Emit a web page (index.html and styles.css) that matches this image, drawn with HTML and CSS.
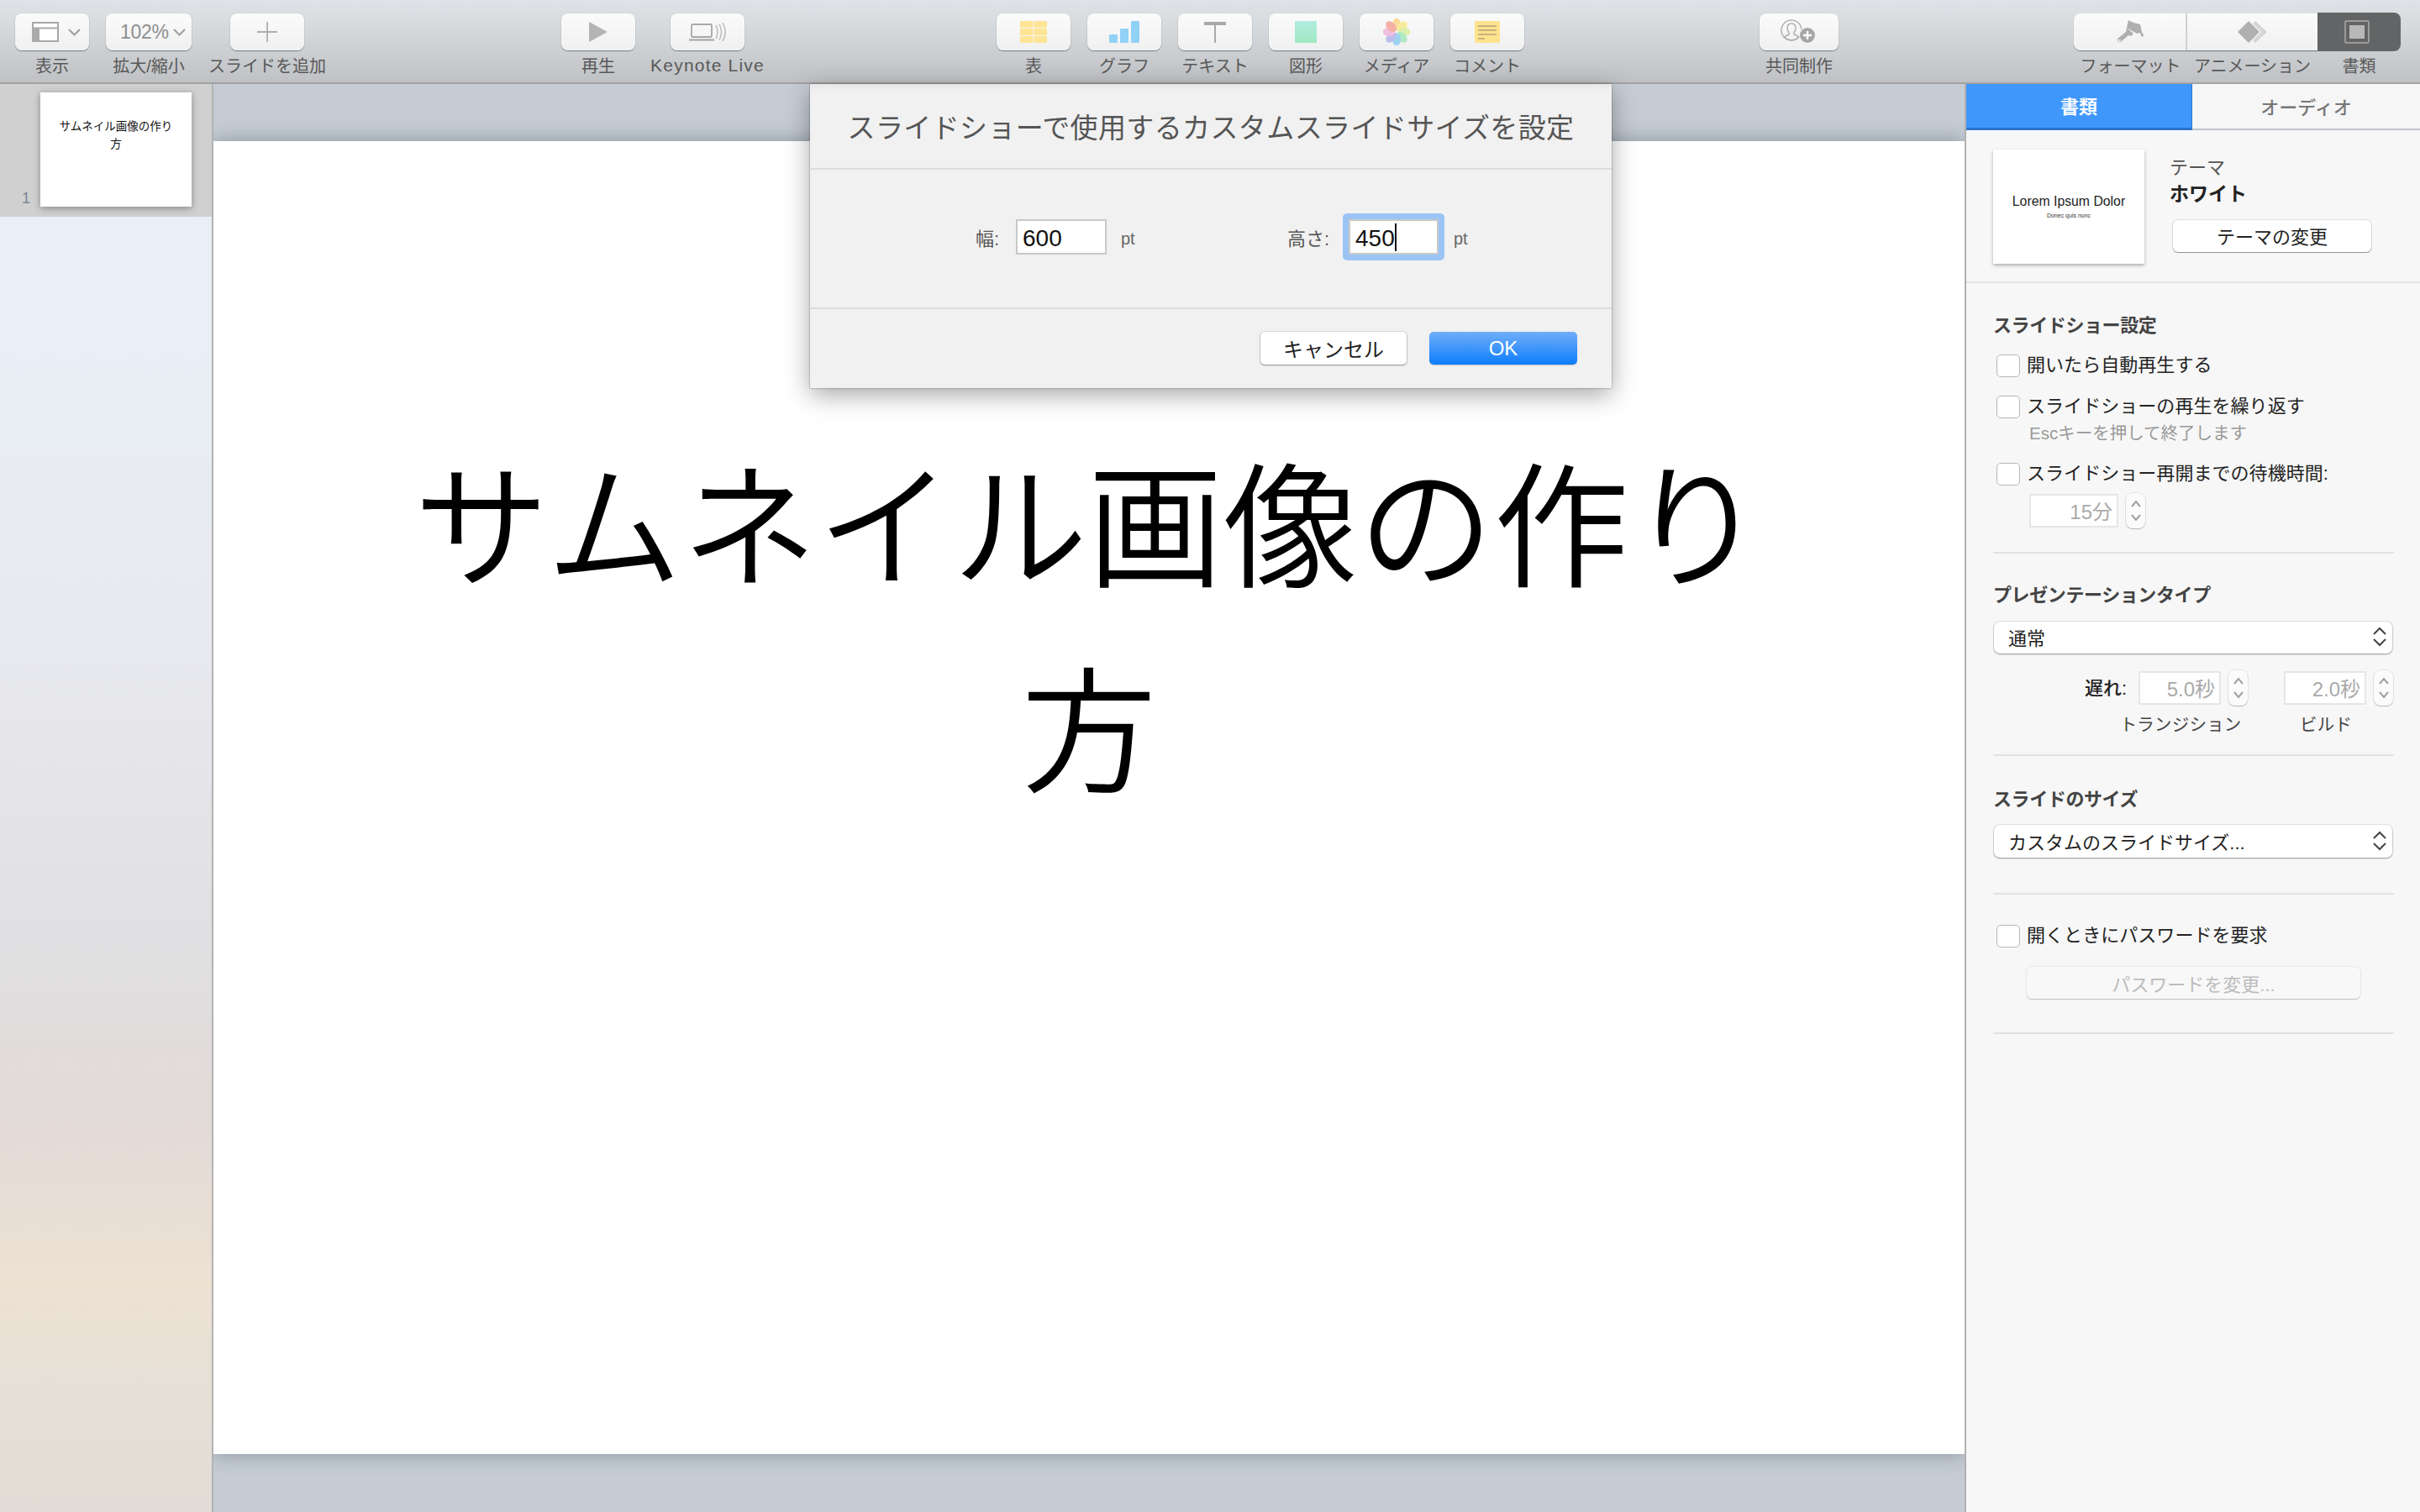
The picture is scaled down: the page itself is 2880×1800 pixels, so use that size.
FILE: index.html
```html
<!DOCTYPE html>
<html lang="ja">
<head>
<meta charset="utf-8">
<title>Keynote</title>
<link rel="stylesheet" href="styles.css">
</head>
<body>
<div class="app">
  <header class="toolbar">
    <div class="group group-a">
      <div class="tool"><div class="tb tb-split">
        <svg width="32" height="24" viewBox="0 0 32 24"><rect x="1" y="1" width="30" height="22" fill="#fff" stroke="#a8a8a8" stroke-width="2"/><path d="M1 7.500h30" stroke="#a8a8a8" stroke-width="2"/><rect y="7" width="9" height="17" fill="#aaa"/></svg>
        <svg class="chev" width="15" height="9" viewBox="0 0 15 9"><path d="M1 1l6.500 6.500L14 1" fill="none" stroke="#a0a0a0" stroke-width="2.200"/></svg>
      </div><span class="tlabel">表示</span></div>
      <div class="tool tool-zoom"><div class="tb tb-split tb-zoom"><span class="pct">102%</span>
        <svg class="chev" width="15" height="9" viewBox="0 0 15 9"><path d="M1 1l6.500 6.500L14 1" fill="none" stroke="#a0a0a0" stroke-width="2.200"/></svg>
      </div><span class="tlabel">拡大/縮小</span></div>
      <div class="tool tool-add"><div class="tb">
        <svg width="24" height="24" viewBox="0 0 24 24"><path d="M12 0v24M0 12h24" stroke="#aeaeae" stroke-width="1.800"/></svg>
      </div><span class="tlabel">スライドを追加</span></div>
    </div>
    <div class="group group-b">
      <div class="tool"><div class="tb">
        <svg width="22" height="24" viewBox="0 0 22 24"><path d="M0 0l22 12L0 24z" fill="#b4b4b4"/></svg>
      </div><span class="tlabel">再生</span></div>
      <div class="tool"><div class="tb">
        <svg width="44" height="22" viewBox="0 0 44 22"><rect x="3" y="2" width="24" height="15" rx="1.500" fill="none" stroke="#a8a8a8" stroke-width="1.800"/><path d="M0 20.500h30" stroke="#a8a8a8" stroke-width="2.200"/><path d="M32 3c2.500 5 2.500 11 0 16M36 1.500c3.200 6 3.200 13 0 19M40 0c4 7 4 15 0 22" fill="none" stroke="#bbb" stroke-width="1.500"/></svg>
      </div><span class="tlabel tlabel-latin">Keynote Live</span></div>
    </div>
    <div class="group group-c">
      <div class="tool"><div class="tb">
        <svg width="32" height="26" viewBox="0 0 32 26"><g fill="#fde595"><rect width="15.500" height="8"/><rect x="16.500" width="15.500" height="8"/><rect y="9" width="15.500" height="8"/><rect x="16.500" y="9" width="15.500" height="8"/><rect y="18" width="15.500" height="8"/><rect x="16.500" y="18" width="15.500" height="8"/></g></svg>
      </div><span class="tlabel">表</span></div>
      <div class="tool"><div class="tb">
        <svg width="36" height="26" viewBox="0 0 36 26"><g fill="#92d1f6"><rect y="16" width="10" height="10" rx="1"/><rect x="13" y="9" width="10" height="17" rx="1"/><rect x="26" width="10" height="26" rx="1"/></g></svg>
      </div><span class="tlabel">グラフ</span></div>
      <div class="tool"><div class="tb">
        <svg width="26" height="25" viewBox="0 0 26 25"><path d="M0 0h26v4H0z" fill="#a9a9a9"/><path d="M12 4h2v21h-2z" fill="#a9a9a9"/></svg>
      </div><span class="tlabel">テキスト</span></div>
      <div class="tool"><div class="tb">
        <div class="shape-icon"></div>
      </div><span class="tlabel">図形</span></div>
      <div class="tool"><div class="tb">
        <svg width="32" height="32" viewBox="-16 -16 32 32">
          <g opacity=".85">
          <ellipse cy="-9" rx="5" ry="7.500" fill="#fbd58a"/>
          <ellipse cy="-9" rx="5" ry="7.500" fill="#fbe88f" transform="rotate(45)"/>
          <ellipse cy="-9" rx="5" ry="7.500" fill="#d9eea0" transform="rotate(90)"/>
          <ellipse cy="-9" rx="5" ry="7.500" fill="#a5e8bc" transform="rotate(135)"/>
          <ellipse cy="-9" rx="5" ry="7.500" fill="#8fcdf1" transform="rotate(180)"/>
          <ellipse cy="-9" rx="5" ry="7.500" fill="#b3b5ea" transform="rotate(225)"/>
          <ellipse cy="-9" rx="5" ry="7.500" fill="#efb6dc" transform="rotate(270)"/>
          <ellipse cy="-9" rx="5" ry="7.500" fill="#f6a398" transform="rotate(315)"/>
          </g>
        </svg>
      </div><span class="tlabel">メディア</span></div>
      <div class="tool"><div class="tb">
        <svg width="30" height="26" viewBox="0 0 30 26"><rect width="30" height="26" rx="1" fill="#fde38d"/><path d="M4 6h22M4 11h22M4 16h22M4 21h8" stroke="#c8b27c" stroke-width="2"/></svg>
      </div><span class="tlabel">コメント</span></div>
    </div>
    <div class="group group-d">
      <div class="tool tool-collab"><div class="tb">
        <svg width="44" height="30" viewBox="0 0 44 30"><circle cx="13" cy="13" r="12" fill="none" stroke="#b0b0b0" stroke-width="1.500"/><path d="M13 5c3.500 0 5 2.600 5 5.500 0 2-1 4-2 5v2c2 1.200 4.500 2 5.500 3.500A12 12 0 0 1 4.500 21.500C5.500 20 8 19.200 10 18v-2.500c-1-1-2-3-2-5C8 7.600 9.500 5 13 5z" fill="none" stroke="#b0b0b0" stroke-width="1.500"/><circle cx="32" cy="19" r="10" fill="#f5f5f5"/><circle cx="32" cy="19" r="9" fill="#a6a6a6"/><path d="M32 14v10M27 19h10" stroke="#fff" stroke-width="2.400"/></svg>
      </div><span class="tlabel">共同制作</span></div>
    </div>
    <div class="group group-e">
      <div class="seg seg-format"><div class="seg-btn">
        <svg width="32" height="28" viewBox="0 0 32 28"><path d="M14 0l6 3 8 2 2 9 2 4c0 2-3 2-3 0l-1-3-4 1-12-7z" fill="#afafaf"/><path d="M12 9l8 7-3 3-3-1-8 7c-2 2-5.500 1-5-2 0-1 1-2 2-2.500l8-6.500z" fill="#afafaf"/><circle cx="3.500" cy="24" r="1.300" fill="#f4f4f4"/></svg>
      </div><span class="tlabel">フォーマット</span></div>
      <div class="seg seg-anim"><div class="seg-btn">
        <svg width="35" height="26" viewBox="0 0 35 26"><path d="M13 0l13 13-13 13L0 13z" fill="#b0b0b0"/><path d="M21 0l14 13-14 13-3-3 10-10-10-10z" fill="#d6d6d6"/></svg>
      </div><span class="tlabel">アニメーション</span></div>
      <div class="seg seg-doc"><div class="seg-btn seg-active">
        <div class="doc-icon"><div class="doc-inner"></div></div>
      </div><span class="tlabel">書類</span></div>
    </div>
  </header>

  <div class="work">
    <aside class="sidebar">
      <div class="slide-row">
        <span class="slide-num">1</span>
        <div class="thumb">サムネイル画像の作り<br>方</div>
      </div>
    </aside>

    <main class="canvas">
      <div class="slide">サムネイル画像の作り<br>方</div>
    </main>

    <aside class="panel">
      <div class="tabs"><div class="tab tab-on">書類</div><div class="tab">オーディオ</div></div>
      <section class="theme">
        <div class="theme-thumb"><span class="lorem">Lorem Ipsum Dolor</span><span class="donec">Donec quis nunc</span></div>
        <div class="theme-info">
          <div class="theme-k">テーマ</div>
          <div class="theme-v">ホワイト</div>
          <div class="btn btn-theme">テーマの変更</div>
        </div>
      </section>

      <section class="sec sec-show">
        <h3 class="h">スライドショー設定</h3>
        <label class="chk chk-1"><span class="box"></span>開いたら自動再生する</label>
        <label class="chk chk-2"><span class="box"></span>スライドショーの再生を繰り返す</label>
        <div class="note">Escキーを押して終了します</div>
        <label class="chk"><span class="box"></span>スライドショー再開までの待機時間:</label>
        <div class="stepfield sf-wait">
          <span class="num num-wait">15分</span>
          <span class="stepper"><svg width="12" height="30" viewBox="0 0 12 30"><path d="M1 10l5-6 5 6M1 20l5 6 5-6" fill="none" stroke="#a0a0a0" stroke-width="2"/></svg></span>
        </div>
      </section>

      <section class="sec sec-type">
        <h3 class="h">プレゼンテーションタイプ</h3>
        <div class="select select-type"><span>通常</span>
          <svg width="16" height="24" viewBox="0 0 16 24"><path d="M1 9l7-7 7 7M1 15l7 7 7-7" fill="none" stroke="#444" stroke-width="2"/></svg>
        </div>
        <div class="delays">
          <span class="delay-k">遅れ:</span>
          <div class="delay-col">
            <div class="stepfield"><span class="num num-delay">5.0秒</span><span class="stepper"><svg width="12" height="30" viewBox="0 0 12 30"><path d="M1 10l5-6 5 6M1 20l5 6 5-6" fill="none" stroke="#a0a0a0" stroke-width="2"/></svg></span></div>
            <div class="delay-cap">トランジション</div>
          </div>
          <div class="delay-col delay-col-2">
            <div class="stepfield"><span class="num num-delay">2.0秒</span><span class="stepper"><svg width="12" height="30" viewBox="0 0 12 30"><path d="M1 10l5-6 5 6M1 20l5 6 5-6" fill="none" stroke="#a0a0a0" stroke-width="2"/></svg></span></div>
            <div class="delay-cap">ビルド</div>
          </div>
        </div>
      </section>

      <section class="sec sec-size">
        <h3 class="h">スライドのサイズ</h3>
        <div class="select select-size"><span>カスタムのスライドサイズ...</span>
          <svg width="16" height="24" viewBox="0 0 16 24"><path d="M1 9l7-7 7 7M1 15l7 7 7-7" fill="none" stroke="#444" stroke-width="2"/></svg>
        </div>
      </section>

      <section class="sec sec-pass">
        <label class="chk"><span class="box"></span>開くときにパスワードを要求</label>
        <div class="btn btn-pass">パスワードを変更...</div>
      </section>
    </aside>
  </div>

  <div class="dialog">
    <div class="dlg-head">スライドショーで使用するカスタムスライドサイズを設定</div>
    <div class="dlg-body">
      <div class="dim dim-w">
        <span class="dim-k">幅:</span>
        <span class="input">600</span>
        <span class="unit">pt</span>
      </div>
      <div class="dim dim-h">
        <span class="dim-k">高さ:</span>
        <span class="ring"><span class="input input-focus">450<i class="caret"></i></span></span>
        <span class="unit">pt</span>
      </div>
    </div>
    <div class="dlg-foot">
      <div class="dbtn dbtn-cancel">キャンセル</div>
      <div class="dbtn dbtn-ok">OK</div>
    </div>
  </div>
</div>
</body>
</html>
```

FILE: styles.css
```css
* { box-sizing: border-box; }
html, body { margin: 0; padding: 0; }
body {
  width: 2880px; height: 1800px; overflow: hidden;
  font-family: "Liberation Sans", "Noto Sans CJK JP", sans-serif;
  color: #222;
}
.app { position: relative; width: 2880px; height: 1800px; display: flex; flex-direction: column; }

/* toolbar */
.toolbar {
  height: 100px; flex: none; display: flex; align-items: flex-start;
  padding: 16px 0 0 18px;
  background: linear-gradient(#dfe2e6, #d6d9dc 35%, #bfc1c4);
  border-bottom: 2px solid #a3a3a3;
}
.group { display: flex; gap: 20px; }
.group-b { margin-left: 306px; gap: 42px; }
.group-c { margin-left: 300px; }
.group-d { margin-left: 280px; }
.group-e { margin-left: 280px; gap: 0; }
.tool { width: 88px; display: flex; flex-direction: column; align-items: center; }
.tool-zoom { width: 102px; }
.tool-add { margin-left: 26px; }
.tool-collab { width: 94px; }
.tb {
  width: 100%; height: 44px; flex: none;
  display: flex; align-items: center; justify-content: center;
  border-radius: 8px;
  background: linear-gradient(#fbfbfb, #f0f0f0);
  box-shadow: 0 1px 1px rgba(0,0,0,.38), 0 0 0 1px rgba(0,0,0,.03);
}
.tb-split { justify-content: flex-start; gap: 11px; padding-left: 20px; }
.tb-zoom { gap: 5px; padding-left: 17px; }
.pct { font-size: 23px; color: #8e8e8e; letter-spacing: -.3px; }
.chev { flex: none; }
.tlabel { margin-top: 7px; font-size: 20px; line-height: 24px; color: #585858; white-space: nowrap; }
.tlabel-latin { font-size: 21px; letter-spacing: 1.200px; margin-top: 6px; }
.shape-icon { width: 26px; height: 26px; background: linear-gradient(#b3ece2, #a0e8c0); }

.seg { display: flex; flex-direction: column; align-items: center; }
.seg-format { width: 135px; }
.seg-anim { width: 155px; }
.seg-doc { width: 99px; }
.seg-btn {
  width: 100%; height: 44px; display: flex; align-items: center; justify-content: center;
  background: linear-gradient(#fbfbfb, #f0f0f0);
  box-shadow: 0 1px 1px rgba(0,0,0,.38);
}
.seg-format .seg-btn { border-radius: 8px 0 0 8px; border-right: 2px solid #d8d8d8; }
.seg-active { background: #636465; border-radius: 0 8px 8px 0; box-shadow: none; height: 46px; margin-top: -1px; margin-bottom: -1px; padding-right: 6px; }
.doc-icon { width: 30px; height: 28px; border: 2px solid #9b9b9b; border-radius: 3px; padding: 4px; }
.doc-inner { width: 100%; height: 100%; background: #b8b8b8; }

/* body */
.work { flex: 1; display: flex; min-height: 0; }
.sidebar {
  width: 254px; flex: none;
  border-right: 2px solid #b2b2b2;
  background: linear-gradient(#e8f0f7 0%, #e9eff6 18%, #e8e9ee 40%, #e0e0e2 60%, #e2dad8 72%, #ede1d2 84%, #e7e0d6 90%, #e3dcd6 100%);
}
.slide-row {
  height: 158px; background: #d0d0d0;
  display: flex; align-items: flex-start; padding: 10px 0 0 26px;
}
.slide-num { width: 22px; height: 138px; display: flex; align-items: flex-end; font-size: 18px; line-height: 24px; color: #7c8794; }
.thumb {
  width: 180px; height: 136px; background: #fff; text-align: center;
  padding-top: 30px; font-size: 13.500px; line-height: 21px; color: #111;
  box-shadow: 0 2px 8px rgba(0,0,0,.35);
}
.canvas { flex: 1; background: #c5ccd4; padding-top: 68px; min-width: 0; overflow: hidden; }
.slide {
  height: 1563px; background: #fff; text-align: center;
  padding-top: 341px; font-size: 161px; line-height: 244px; color: #000; font-weight: 350;
  box-shadow: 0 0 22px rgba(40,50,60,.38);
}

/* right panel */
.panel { width: 542px; flex: none; background: #f7f7f7; border-left: 2px solid #b0b0b0; }
.tabs { display: flex; height: 55px; }
.tab {
  flex: 1; display: flex; align-items: center; justify-content: center;
  font-size: 22px; color: #777; background: #f6f6f6; border-bottom: 2px solid #c0c4ca;
  font-weight: 500; padding-bottom: 2px;
}
.tab-on { flex: none; width: 269px; background: #4097fb; color: #fff; font-weight: 700; border-bottom: 3px solid #2c74c9; border-right: 1px solid #2c74c9; }
.theme {
  height: 182px; display: flex; padding: 23px 0 0 32px;
  border-bottom: 2px solid #e3e3e3;
}
.theme-thumb {
  width: 180px; height: 136px; background: #fff; flex: none;
  display: flex; flex-direction: column; align-items: center; padding-top: 52px;
  box-shadow: 0 2px 4px rgba(0,0,0,.3);
}
.lorem { font-size: 15.800px; line-height: 20px; color: #222; white-space: nowrap; }
.donec { font-size: 7px; line-height: 9px; margin-top: 2px; color: #333; white-space: nowrap; }
.theme-info { margin-left: 30px; width: 240px; }
.theme-k { font-size: 22px; line-height: 30px; margin-top: 7px; color: #555; }
.theme-v { font-size: 23px; line-height: 30px; margin-top: 1px; font-weight: 700; color: #222; }
.btn {
  display: flex; align-items: center; justify-content: center;
  background: #fff; border-radius: 6px; font-size: 22px;
  box-shadow: 0 1px 1px rgba(0,0,0,.35), 0 0 0 1px rgba(0,0,0,.09);
}
.btn-theme { width: 236px; height: 38px; margin: 16px 0 0 4px; padding-bottom: 2px; color: #222; }

.sec { margin: 0 31px 0 32px; border-bottom: 2px solid #e2e2e2; }
.h { margin: 0; height: 28px; padding-top: 2px; font-size: 22px; line-height: 26px; font-weight: 700; color: #444; letter-spacing: -.4px; }
.sec-show { padding: 36px 0 28px; }
.chk { display: flex; align-items: flex-start; height: 27px; line-height: 26px; margin-left: 4px; font-size: 22px; color: #222; white-space: nowrap; letter-spacing: .05px; }
.box { width: 28px; height: 27px; margin-right: 8px; background: #fff; border: 1px solid #b6b6b6; border-radius: 5px; flex: none; }
.chk-1 { margin-top: 21px; }
.chk-2 { margin-top: 22px; }
.note { margin: 4px 0 21px 43px; font-size: 20.500px; line-height: 28px; color: #999; }
.stepfield { display: flex; align-items: center; gap: 9px; }
.sf-wait { margin: 9px 0 0 43px; }
.num { display: block; height: 40px; background: #fff; border: 2px solid #e6e6e6; text-align: right; color: #aaa; font-size: 24px; line-height: 39px; padding-right: 5px; }
.num-wait { width: 106px; }
.num-delay { width: 98px; }
.stepper { width: 23px; height: 42px; display: flex; align-items: center; justify-content: center; background: #fbfbfb; border-radius: 8px; box-shadow: 0 1px 1px rgba(0,0,0,.2), 0 0 0 1px rgba(0,0,0,.07); }
.sec-type { padding: 35px 0 21px; }
.select {
  height: 38px; margin: 18px 2px 0 1px; padding: 0 7px 2px 17px;
  display: flex; align-items: center; justify-content: space-between;
  background: #fff; border-radius: 7px; font-size: 22px; color: #222;
  box-shadow: 0 1px 2px rgba(0,0,0,.35), 0 0 0 1px rgba(0,0,0,.08);
}
.delays { display: flex; margin-top: 20px; }
.delay-k { margin: 8px 14px 0 109px; font-size: 22px; line-height: 28px; color: #222; font-weight: 500; white-space: nowrap; }
.delay-col { display: flex; flex-direction: column; }
.delay-col-2 { margin-left: 43px; }
.delay-cap { margin-top: 9px; width: 100px; display: flex; justify-content: center; font-size: 20.500px; line-height: 28px; color: #444; white-space: nowrap; letter-spacing: .2px; }
.sec-size { padding: 37px 0 42px; }
.select-size { height: 39px; margin-top: 17px; }
.sec-pass { padding: 36px 0 40px; }
.btn-pass { width: 397px; height: 38px; margin: 23px 0 0 40px; background: #f8f8f8; color: #bcbcbc; box-shadow: 0 1px 1px rgba(0,0,0,.18), 0 0 0 1px rgba(0,0,0,.05); }

/* dialog */
.dialog {
  position: absolute; left: 964px; top: 100px; width: 954px; height: 362px;
  background: #f1f1f1;
  box-shadow: 0 0 2px rgba(0,0,0,.4), 0 8px 28px rgba(0,0,0,.35);
}
.dlg-head {
  height: 102px; border-bottom: 2px solid #dcdcdc;
  display: flex; align-items: center; justify-content: center;
  font-size: 33px; letter-spacing: .38px; color: #555; white-space: nowrap;
  background: linear-gradient(#e6e6e6, #f1f1f1 8px);
}
.dlg-body { height: 166px; border-bottom: 2px solid #dcdcdc; display: flex; align-items: flex-start; }
.dim { display: flex; align-items: center; height: 42px; margin-top: 59px; }
.dim-w { margin-left: 197px; }
.dim-h { margin-left: 178px; }
.dim-k { font-size: 22px; color: #555; white-space: nowrap; }
.dim-w .dim-k { width: 48px; }
.dim-h .dim-k { width: 66px; }
.input {
  display: block; width: 108px; height: 42px; position: relative;
  background: #fff; border: 2px solid #c9c9c9;
  font-size: 28px; line-height: 42px; padding-left: 6px; color: #111;
}
.ring { display: block; padding: 7px; background: #9bc4f4; border-radius: 5px; }
.input-focus { width: 107px; height: 42px; }
.caret { position: absolute; left: 53px; top: 3px; width: 2px; height: 33px; background: #111; }
.unit { margin-left: 17px; font-size: 20px; color: #666; margin-top: 5px; width: 20px; }
.dim-h .unit { margin-left: 11px; }
.dlg-foot { display: flex; justify-content: flex-end; align-items: center; gap: 27px; padding: 27px 41px 0 0; }
.dbtn { display: flex; align-items: center; justify-content: center; height: 39px; border-radius: 5px; font-size: 24px; }
.dbtn-cancel { width: 174px; background: #fff; color: #222; box-shadow: 0 1px 2px rgba(0,0,0,.35), 0 0 0 1px rgba(0,0,0,.09); }
.dbtn-ok { width: 176px; background: linear-gradient(#70aefa, #0d7dfb); color: #fff; box-shadow: 0 1px 1px rgba(0,0,0,.2); }
```
